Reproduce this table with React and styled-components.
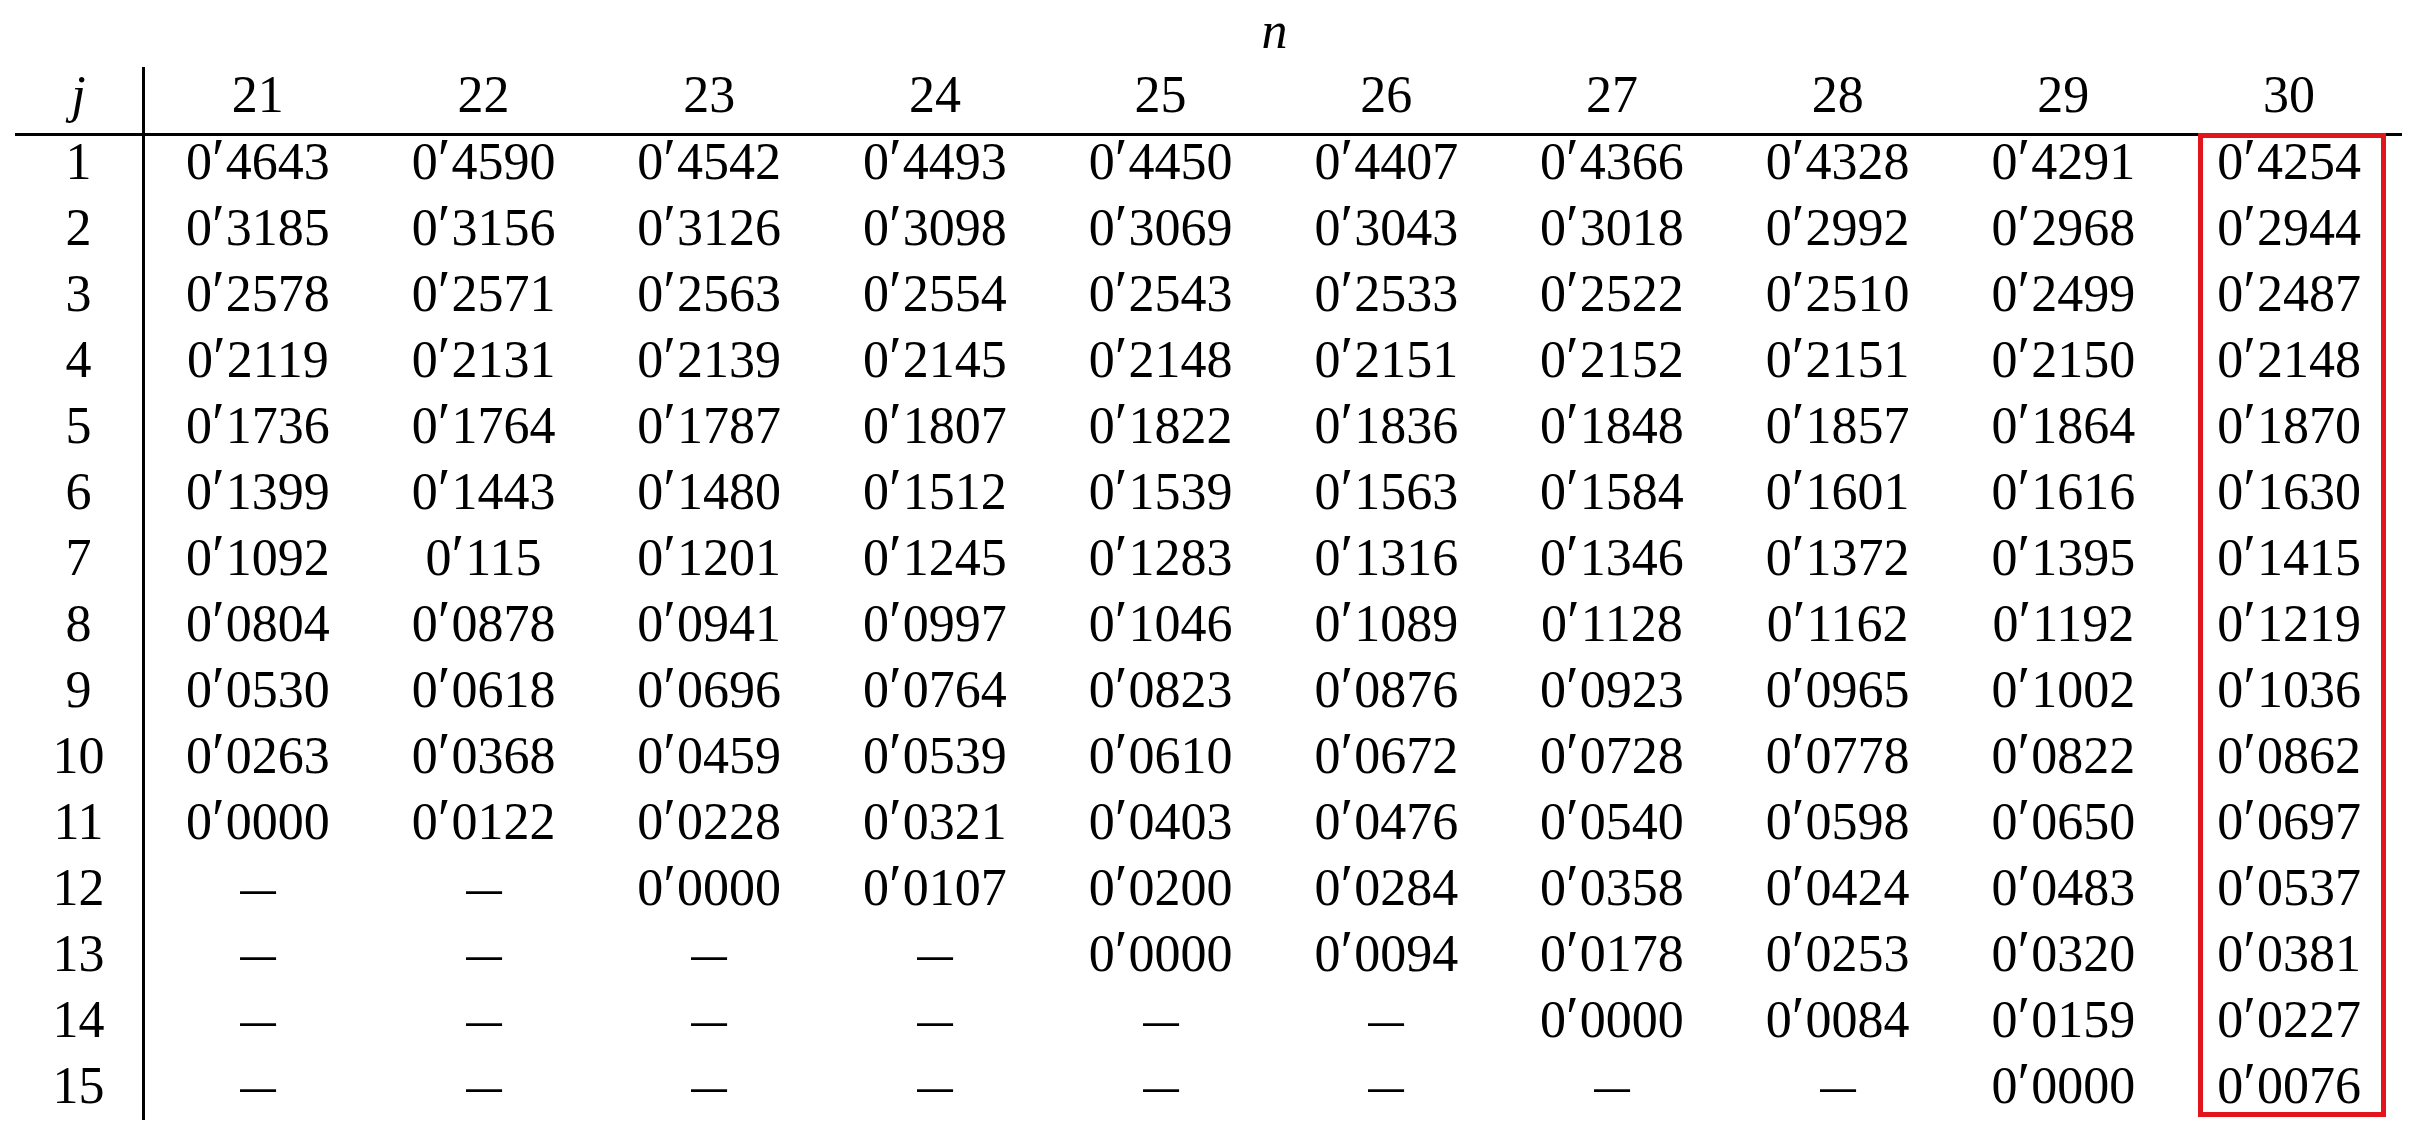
import React from "react";
import styled, { createGlobalStyle } from "styled-components";

const GlobalStyle = createGlobalStyle`
  html, body { margin: 0; padding: 0; background: #ffffff; }
  body { font-family: "Liberation Serif", "Times New Roman", serif; color: #000000; }
`;

const ROWS = [
  ["4643", "4590", "4542", "4493", "4450", "4407", "4366", "4328", "4291", "4254"],
  ["3185", "3156", "3126", "3098", "3069", "3043", "3018", "2992", "2968", "2944"],
  ["2578", "2571", "2563", "2554", "2543", "2533", "2522", "2510", "2499", "2487"],
  ["2119", "2131", "2139", "2145", "2148", "2151", "2152", "2151", "2150", "2148"],
  ["1736", "1764", "1787", "1807", "1822", "1836", "1848", "1857", "1864", "1870"],
  ["1399", "1443", "1480", "1512", "1539", "1563", "1584", "1601", "1616", "1630"],
  ["1092", "115", "1201", "1245", "1283", "1316", "1346", "1372", "1395", "1415"],
  ["0804", "0878", "0941", "0997", "1046", "1089", "1128", "1162", "1192", "1219"],
  ["0530", "0618", "0696", "0764", "0823", "0876", "0923", "0965", "1002", "1036"],
  ["0263", "0368", "0459", "0539", "0610", "0672", "0728", "0778", "0822", "0862"],
  ["0000", "0122", "0228", "0321", "0403", "0476", "0540", "0598", "0650", "0697"],
  [null, null, "0000", "0107", "0200", "0284", "0358", "0424", "0483", "0537"],
  [null, null, null, null, "0000", "0094", "0178", "0253", "0320", "0381"],
  [null, null, null, null, null, null, "0000", "0084", "0159", "0227"],
  [null, null, null, null, null, null, null, null, "0000", "0076"],
];

const N_VALUES = [21, 22, 23, 24, 25, 26, 27, 28, 29, 30];

const Page = styled.div`
  padding-left: 15px;
`;

const Table = styled.div`
  display: grid;
  grid-template-columns: 130px repeat(10, 225.7px);
  grid-template-rows: 67px 69px repeat(14, 66px) 60px;
  font-size: 52px;
  white-space: nowrap;
`;

const Title = styled.div`
  grid-column: 2 / 12;
  grid-row: 1;
  text-align: center;
  font-style: italic;
  line-height: 61px;
  font-size: 52px;
  padding-left: 2px;
`;

const HeadCell = styled.div`
  grid-row: 2;
  grid-column: ${(p) => p.$col};
  text-align: center;
  line-height: 55px;
  border-bottom: 3px solid #000000;
  border-right: ${(p) => (p.$stub ? "3px solid #000000" : "none")};
  font-style: ${(p) => (p.$stub ? "italic" : "normal")};
`;

const Cell = styled.div`
  grid-row: ${(p) => p.$row};
  grid-column: ${(p) => p.$col};
  text-align: center;
  line-height: 51px;
  border-right: ${(p) => (p.$stub ? "3px solid #000000" : "none")};
`;

const Prime = styled.span`
  display: inline-block;
  font-size: 1.12em;
  line-height: 0;
  margin: 0 1px 0 0;
`;

const Dash = styled.span`
  display: inline-block;
  transform: scaleX(1.35);
`;

const Highlight = styled.div`
  grid-column: 11;
  grid-row: 3 / 18;
  margin: -3px 0 3px 22px;
  width: 188px;
  box-sizing: border-box;
  border: 5px solid #e3151c;
  pointer-events: none;
`;

function Value({ v }) {
  if (v === null) return <Dash>–</Dash>;
  return (
    <>
      0<Prime>′</Prime>
      {v}
    </>
  );
}

export default function App() {
  return (
    <Page>
      <GlobalStyle />
      <Table>
        <Title>n</Title>
        <HeadCell $stub $col={1}>j</HeadCell>
        {N_VALUES.map((n, k) => (
          <HeadCell key={n} $col={k + 2}>{n}</HeadCell>
        ))}
        {ROWS.map((row, i) => (
          <React.Fragment key={i}>
            <Cell $stub $row={i + 3} $col={1}>{i + 1}</Cell>
            {row.map((v, k) => (
              <Cell key={k} $row={i + 3} $col={k + 2}>
                <Value v={v} />
              </Cell>
            ))}
          </React.Fragment>
        ))}
        <Highlight />
      </Table>
    </Page>
  );
}
